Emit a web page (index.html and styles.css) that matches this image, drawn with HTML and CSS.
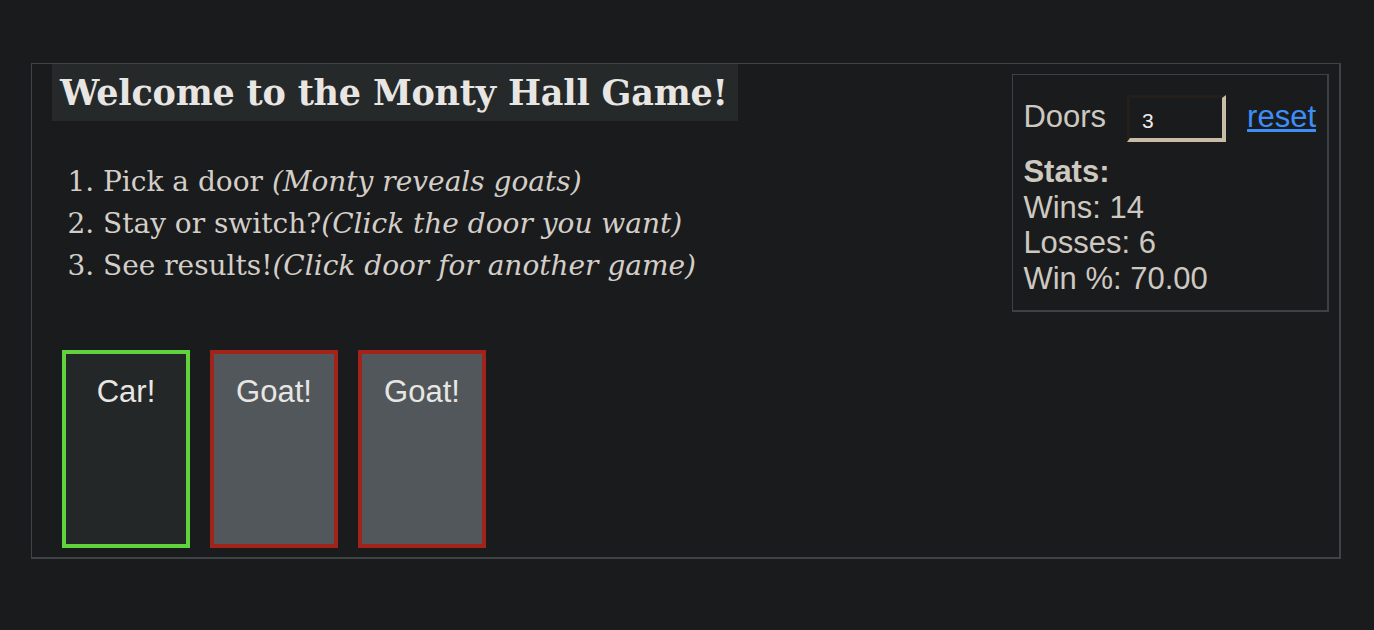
FILE: index.html
```html
<!DOCTYPE html>
<html lang="en">
<head>
<meta charset="utf-8">
<title>Monty Hall Game</title>
<link rel="stylesheet" href="styles.css">
</head>
<body>
<div class="game">
  <div class="main">
    <h1 class="title">Welcome to the Monty Hall Game!</h1>
    <ol class="steps">
      <li>Pick a door <em>(Monty reveals goats)</em></li>
      <li>Stay or switch?<em>(Click the door you want)</em></li>
      <li>See results!<em>(Click door for another game)</em></li>
    </ol>
    <div class="doors">
      <div class="door door-win">Car!</div>
      <div class="door door-lose">Goat!</div>
      <div class="door door-lose">Goat!</div>
    </div>
  </div>
  <aside class="stats">
    <div class="controls">
      <label class="doors-label" for="doors">Doors</label>
      <input class="doors-input" id="doors" type="text" value="3">
      <a class="reset" href="#">reset</a>
    </div>
    <div class="stat-lines">
      <div class="stat-head">Stats:</div>
      <div>Wins: 14</div>
      <div>Losses: 6</div>
      <div>Win %: 70.00</div>
    </div>
  </aside>
</div>
</body>
</html>
```
FILE: styles.css
```css
html, body {
  margin: 0;
  padding: 0;
  background: #1a1b1d;
}
body {
  color: #e8e6e3;
  font-family: "Liberation Sans", Arial, sans-serif;
}
.game {
  margin: 63px 33px 0 31px;
  border-style: solid;
  border-color: #3e4346;
  border-width: 1px 2px 2px 1px;
  padding: 0 10px 9px 20px;
  display: flex;
  justify-content: space-between;
  align-items: flex-start;
}
.main {
  display: flex;
  flex-direction: column;
  align-items: flex-start;
}
.title {
  margin: 0;
  background: #25292a;
  color: #e8e6e3;
  font-family: "DejaVu Serif", Georgia, serif;
  font-weight: bold;
  font-size: 35px;
  line-height: 46px;
  padding: 6px 10px 5px 8px;
  letter-spacing: -0.2px;
}
.steps {
  margin: 40px 0 0 0;
  padding-left: 51px;
  font-family: "DejaVu Serif", Georgia, serif;
  font-size: 28px;
  line-height: 42px;
  color: #d3cec7;
}
.steps em {
  font-style: italic;
}
.doors {
  margin: 63px 0 0 10px;
  display: flex;
  gap: 20px;
}
.door {
  box-sizing: border-box;
  width: 128px;
  height: 198px;
  border: 4px solid;
  padding-top: 20px;
  text-align: center;
  font-size: 31px;
  line-height: 36px;
  color: #e8e6e3;
}
.door-win {
  background: #232728;
  border-color: #5fd23c;
}
.door-lose {
  background: #52575b;
  border-color: #a1231a;
}
.stats {
  margin-top: 10px;
  border-style: solid;
  border-color: #3b4144;
  border-width: 1px 2px 2px 1px;
  padding: 20px 11px 13px 10px;
  color: #cdc8c0;
  font-size: 31px;
  line-height: 35.65px;
}
.controls {
  display: flex;
  align-items: center;
  height: 47px;
}
.doors-label {
  margin-top: -3px;
  margin-right: 21px;
}
.doors-input {
  box-sizing: border-box;
  width: 99px;
  height: 47px;
  margin: 0 21px 0 0;
  padding: 5px 0 0 12px;
  background: #1a1b1d;
  color: #f0eeeb;
  font-family: "Liberation Sans", Arial, sans-serif;
  font-size: 21px;
  border-style: solid;
  border-width: 3px 4px 4px 3px;
  border-color: #241f1a #c8bca6 #c8bca6 #241f1a;
  outline: none;
}
.reset {
  color: #3d8ef5;
  text-decoration: underline;
  margin-top: -3px;
}
.stat-lines {
  margin-top: 12px;
}
.stat-head {
  font-weight: bold;
}
```
